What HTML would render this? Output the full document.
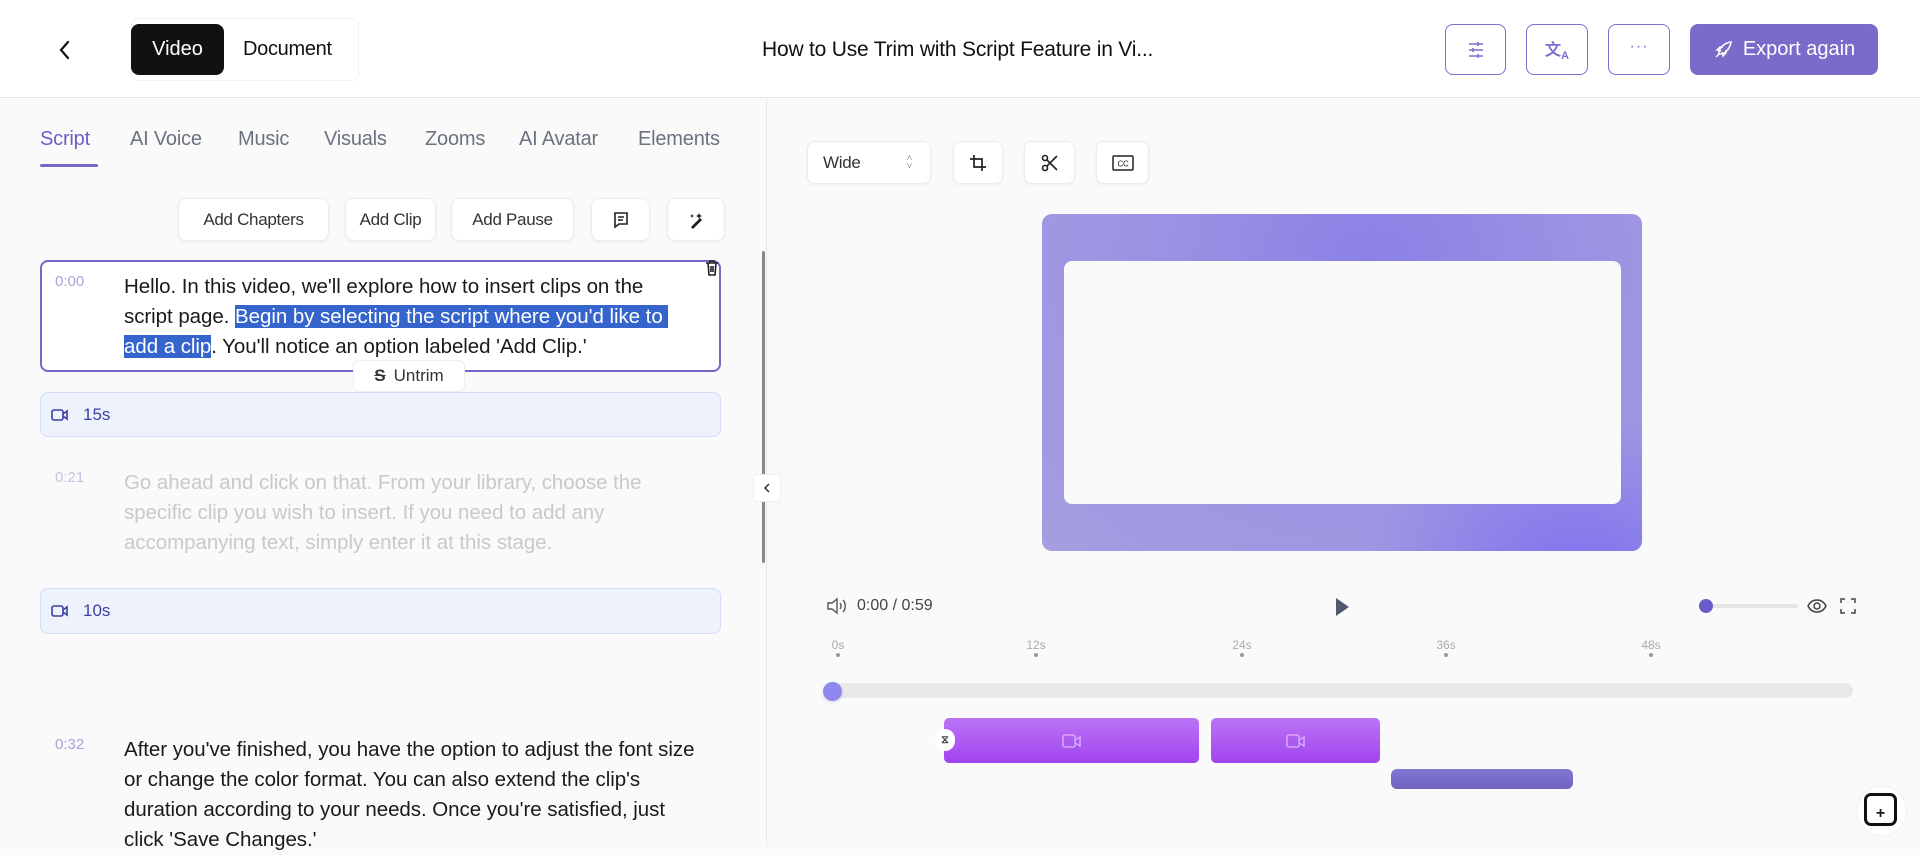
<!DOCTYPE html>
<html><head><meta charset="utf-8"><style>
*{box-sizing:border-box;margin:0;padding:0}
body{width:1920px;height:846px;overflow:hidden;background:#fafafa;font-family:"Liberation Sans",sans-serif;position:relative;color:#1a1a1a}
.a{position:absolute}
.hdr{left:0;top:0;width:1920px;height:98px;background:#fff;border-bottom:1px solid #e6e6e6}
.ib{border:1.5px solid #7b6fd0;border-radius:8px;background:#fff;display:flex;align-items:center;justify-content:center}
.tab{top:128px;font-size:20px;color:#6b7280;letter-spacing:-0.2px}
.btn{background:#fff;border:1px solid #ececec;border-radius:8px;box-shadow:0 1px 3px rgba(0,0,0,.06);display:flex;align-items:center;justify-content:center;font-size:17px;color:#333;letter-spacing:-0.3px}
.txt{left:124px;width:600px;font-size:20.5px;line-height:30px;letter-spacing:-0.05px;white-space:nowrap}
.time{font-size:15px;color:#a7a3d8}
.clip{left:40px;width:681px;background:#eef2fd;border:1px solid #d4dcf7;border-radius:8px;display:flex;align-items:center;padding-left:10px;font-size:17px;color:#3b3f9e}
.sel{background:#3565cc;color:#fff}
.tick{top:638px;font-size:12px;color:#aaa;transform:translateX(-50%)}
.dot{top:653px;width:4px;height:4px;border-radius:2px;background:#999}
</style></head><body>
<div class="a hdr"></div>
<svg class="a" style="left:57px;top:39px" width="16" height="22" viewBox="0 0 16 22"><path d="M11 3L4 11l7 8" fill="none" stroke="#111" stroke-width="2.2" stroke-linecap="round"/></svg>
<div class="a" style="left:131px;top:18px;width:228px;height:63px;border:1px solid #f0f0f0;border-radius:8px;background:#fff"></div>
<div class="a" style="left:131px;top:24px;width:93px;height:51px;background:#111;border-radius:8px;color:#fff;font-size:20px;display:flex;align-items:center;justify-content:center">Video</div>
<div class="a" style="left:243px;top:38px;font-size:20px;color:#111;letter-spacing:-0.3px">Document</div>
<div class="a" style="left:762px;top:38px;width:400px;font-size:21px;color:#111;letter-spacing:-0.2px;white-space:nowrap">How to Use Trim with Script Feature in Vi...</div>
<div class="a ib" style="left:1445px;top:24px;width:61px;height:51px"><svg width="20" height="20" viewBox="0 0 20 20" stroke="#7b6fd0" stroke-width="1.6" fill="none"><path d="M3 4h14M3 10h14M3 16h14M12 2v4M7 8v4M12 14v4"/></svg></div>
<div class="a ib" style="left:1526px;top:24px;width:62px;height:51px"><span style="color:#7b6fd0;font-size:16px;font-weight:bold">文<sub style="font-size:11px">A</sub></span></div>
<div class="a ib" style="left:1608px;top:24px;width:62px;height:51px"><span style="color:#7b6fd0;font-size:16px;letter-spacing:1px;margin-top:-6px">···</span></div>
<div class="a" style="left:1690px;top:24px;width:188px;height:51px;background:#7a6ac9;border-radius:8px;color:#fff;font-size:20px;display:flex;align-items:center;justify-content:center;gap:10px"><svg width="20" height="20" viewBox="0 0 20 20" fill="none" stroke="#fff" stroke-width="1.5"><path d="M6 14c-1-4 4-11 12-12-1 8-8 13-12 12zM6 14l-3 3M8 11l-4-1 3-3h3M9 12l1 4 3-3v-3"/></svg>Export again</div>

<div class="a" style="left:766px;top:99px;width:1px;height:747px;background:#e8e8e8"></div>
<div class="a tab" style="left:40px;color:#6b5fc4">Script</div>
<div class="a" style="left:40px;top:164px;width:58px;height:3px;background:#7468c8;border-radius:2px"></div>
<div class="a tab" style="left:130px">AI Voice</div>
<div class="a tab" style="left:238px">Music</div>
<div class="a tab" style="left:324px">Visuals</div>
<div class="a tab" style="left:425px">Zooms</div>
<div class="a tab" style="left:519px">AI Avatar</div>
<div class="a tab" style="left:638px">Elements</div>

<div class="a btn" style="left:178px;top:198px;width:151px;height:43px">Add Chapters</div>
<div class="a btn" style="left:345px;top:198px;width:91px;height:43px">Add Clip</div>
<div class="a btn" style="left:451px;top:198px;width:123px;height:43px">Add Pause</div>
<div class="a btn" style="left:591px;top:198px;width:59px;height:43px"><svg width="18" height="18" viewBox="0 0 18 18" fill="none" stroke="#222" stroke-width="1.6"><path d="M3 2h12v11H7l-4 3zM6 6h6M6 9h5"/></svg></div>
<div class="a btn" style="left:667px;top:198px;width:58px;height:43px"><svg width="18" height="18" viewBox="0 0 18 18" fill="#222"><path d="M4 16l9-9 2 2-9 9z"/><path d="M12 2l1 2 2 1-2 1-1 2-1-2-2-1 2-1zM5 3l.6 1.4L7 5l-1.4.6L5 7l-.6-1.4L3 5l1.4-.6z"/></svg></div>

<div class="a" style="left:40px;top:260px;width:681px;height:112px;border:2px solid #7468c8;border-radius:8px;background:#fff"></div>
<svg class="a" style="left:704px;top:259px" width="16" height="18" viewBox="0 0 16 18" fill="none" stroke="#222" stroke-width="1.6"><path d="M2 4h12M6 4V2h4v2M4 4l1 12h6l1-12M7 7v6M9 7v6"/></svg>
<div class="a time" style="left:55px;top:273px">0:00</div>
<div class="a txt" style="top:272px">Hello. In this video, we'll explore how to insert clips on the<br>script page. <span class="sel">Begin by selecting the script where you'd like to&nbsp;</span><br><span class="sel">add a clip</span>. You'll notice an option labeled 'Add Clip.'</div>
<div class="a" style="left:353px;top:360px;width:112px;height:32px;background:#fff;border:1px solid #eee;border-radius:6px;display:flex;align-items:center;justify-content:center;gap:8px;font-size:17px;color:#333"><b style="text-decoration:line-through">S</b>Untrim</div>

<div class="a clip" style="top:392px;height:45px"><svg width="18" height="14" viewBox="0 0 18 14" fill="none" stroke="#3b3f9e" stroke-width="1.6"><rect x="1" y="2" width="11" height="10" rx="2"/><path d="M12 6l4-3v8l-4-3"/></svg><span style="margin-left:14px">15s</span></div>
<div class="a time" style="left:55px;top:469px;color:#c5c3e4">0:21</div>
<div class="a txt" style="top:468px;color:#c9c9c9">Go ahead and click on that. From your library, choose the<br>specific clip you wish to insert. If you need to add any<br>accompanying text, simply enter it at this stage.</div>
<div class="a clip" style="top:588px;height:46px"><svg width="18" height="14" viewBox="0 0 18 14" fill="none" stroke="#3b3f9e" stroke-width="1.6"><rect x="1" y="2" width="11" height="10" rx="2"/><path d="M12 6l4-3v8l-4-3"/></svg><span style="margin-left:14px">10s</span></div>
<div class="a time" style="left:55px;top:736px">0:32</div>
<div class="a txt" style="top:735px">After you've finished, you have the option to adjust the font size<br>or change the color format. You can also extend the clip's<br>duration according to your needs. Once you're satisfied, just<br>click 'Save Changes.'</div>

<div class="a" style="left:762px;top:251px;width:3px;height:312px;background:#888;border-radius:2px"></div>
<div class="a" style="left:753px;top:474px;width:28px;height:28px;background:#fff;border:1px solid #eee;border-radius:4px;display:flex;align-items:center;justify-content:center"><svg width="8" height="12" viewBox="0 0 8 12"><path d="M6 2L2 6l4 4" fill="none" stroke="#333" stroke-width="1.5"/></svg></div>

<div class="a btn" style="left:807px;top:141px;width:124px;height:43px;justify-content:flex-start;padding-left:15px">Wide<span style="position:absolute;right:18px;font-size:10px;color:#999;line-height:8px">˄<br>˅</span></div>
<div class="a btn" style="left:953px;top:141px;width:50px;height:43px"><svg width="18" height="18" viewBox="0 0 18 18" fill="none" stroke="#222" stroke-width="1.7"><path d="M5 1v12h12M1 5h12v12"/></svg></div>
<div class="a btn" style="left:1024px;top:141px;width:51px;height:43px"><svg width="18" height="18" viewBox="0 0 18 18" fill="none" stroke="#222" stroke-width="1.6"><circle cx="4" cy="14" r="2.5"/><circle cx="4" cy="4" r="2.5"/><path d="M6 12L16 2M6 6l10 10"/></svg></div>
<div class="a btn" style="left:1096px;top:141px;width:53px;height:43px"><svg width="22" height="16" viewBox="0 0 22 16"><rect x="1" y="1" width="20" height="14" rx="1" fill="none" stroke="#222" stroke-width="1.5"/><text x="11" y="11.5" font-size="8" text-anchor="middle" font-family="Liberation Sans" fill="#222">CC</text></svg></div>

<div class="a" style="left:1042px;top:214px;width:600px;height:337px;border-radius:10px;overflow:hidden;background:radial-gradient(ellipse at 55% 15%,#8a80e6 0%,#9b92e3 45%,#a59ee0 100%)"><div style="position:absolute;left:300px;top:180px;width:400px;height:240px;background:radial-gradient(ellipse at 60% 80%,#7c6ff0 0%,rgba(124,111,240,0) 65%)"></div></div>
<div class="a" style="left:1064px;top:261px;width:557px;height:243px;background:#fafafa;border-radius:8px"></div>

<svg class="a" style="left:826px;top:597px" width="22" height="18" viewBox="0 0 22 18" fill="none" stroke="#555" stroke-width="1.4"><path d="M2 6h4l5-4v14l-5-4H2zM14 6c1.5 2 1.5 4 0 6M17 3c3 3 3 9 0 12"/></svg>
<div class="a" style="left:857px;top:597px;font-size:16px;color:#444">0:00 / 0:59</div>
<svg class="a" style="left:1334px;top:597px" width="16" height="20" viewBox="0 0 16 20"><path d="M2 1l13 9-13 9z" fill="#4f5b70"/></svg>
<div class="a" style="left:1706px;top:604px;width:92px;height:4px;background:#e5e5e5;border-radius:2px"></div>
<div class="a" style="left:1699px;top:599px;width:14px;height:14px;border-radius:7px;background:#6a5cc8"></div>
<svg class="a" style="left:1807px;top:597px" width="20" height="18" viewBox="0 0 20 18" fill="none" stroke="#444" stroke-width="1.5"><path d="M1 9c4-8 14-8 18 0-4 8-14 8-18 0z"/><circle cx="10" cy="9" r="3"/></svg>
<svg class="a" style="left:1840px;top:598px" width="16" height="16" viewBox="0 0 16 16" fill="none" stroke="#444" stroke-width="1.5"><path d="M1 5V1h4M11 1h4v4M15 11v4h-4M5 15H1v-4"/></svg>

<div class="a tick" style="left:838px">0s</div><div class="a dot" style="left:836px"></div>
<div class="a tick" style="left:1036px">12s</div><div class="a dot" style="left:1034px"></div>
<div class="a tick" style="left:1242px">24s</div><div class="a dot" style="left:1240px"></div>
<div class="a tick" style="left:1446px">36s</div><div class="a dot" style="left:1444px"></div>
<div class="a tick" style="left:1651px">48s</div><div class="a dot" style="left:1649px"></div>

<div class="a" style="left:824px;top:683px;width:1029px;height:15px;background:#e8e8ea;border-radius:8px"></div>
<div class="a" style="left:823px;top:682px;width:19px;height:19px;border-radius:10px;background:#8e88f0;box-shadow:0 1px 3px rgba(0,0,0,.15)"></div>

<div class="a" style="left:944px;top:718px;width:255px;height:45px;border-radius:5px;background:linear-gradient(#bb74f5,#a143ef);display:flex;align-items:center;justify-content:center"><svg width="20" height="16" viewBox="0 0 20 16" fill="none" stroke="#dcb8fb" stroke-width="1.3"><rect x="1" y="2" width="12" height="12" rx="2"/><path d="M13 7l5-3v9l-5-3"/></svg></div>
<div class="a" style="left:935px;top:729px;width:20px;height:22px;border-radius:10px;background:#fff;display:flex;align-items:center;justify-content:center;font-size:11px;color:#444;font-weight:bold">⧖</div>
<div class="a" style="left:1211px;top:718px;width:169px;height:45px;border-radius:5px;background:linear-gradient(#bb74f5,#a143ef);display:flex;align-items:center;justify-content:center"><svg width="20" height="16" viewBox="0 0 20 16" fill="none" stroke="#dcb8fb" stroke-width="1.3"><rect x="1" y="2" width="12" height="12" rx="2"/><path d="M13 7l5-3v9l-5-3"/></svg></div>
<div class="a" style="left:1391px;top:769px;width:182px;height:20px;border-radius:6px;background:linear-gradient(#8377d4,#6f62c0)"></div>

<div class="a" style="left:1858px;top:787px;width:48px;height:48px;border-radius:24px;background:#fff;box-shadow:0 0 4px rgba(0,0,0,.06)"></div>
<div class="a" style="left:1864px;top:793px;width:33px;height:33px;border:3px solid #111;border-radius:7px;display:flex;align-items:flex-end;justify-content:center;font-size:16px;font-weight:bold;line-height:18px">+</div>
</body></html>
